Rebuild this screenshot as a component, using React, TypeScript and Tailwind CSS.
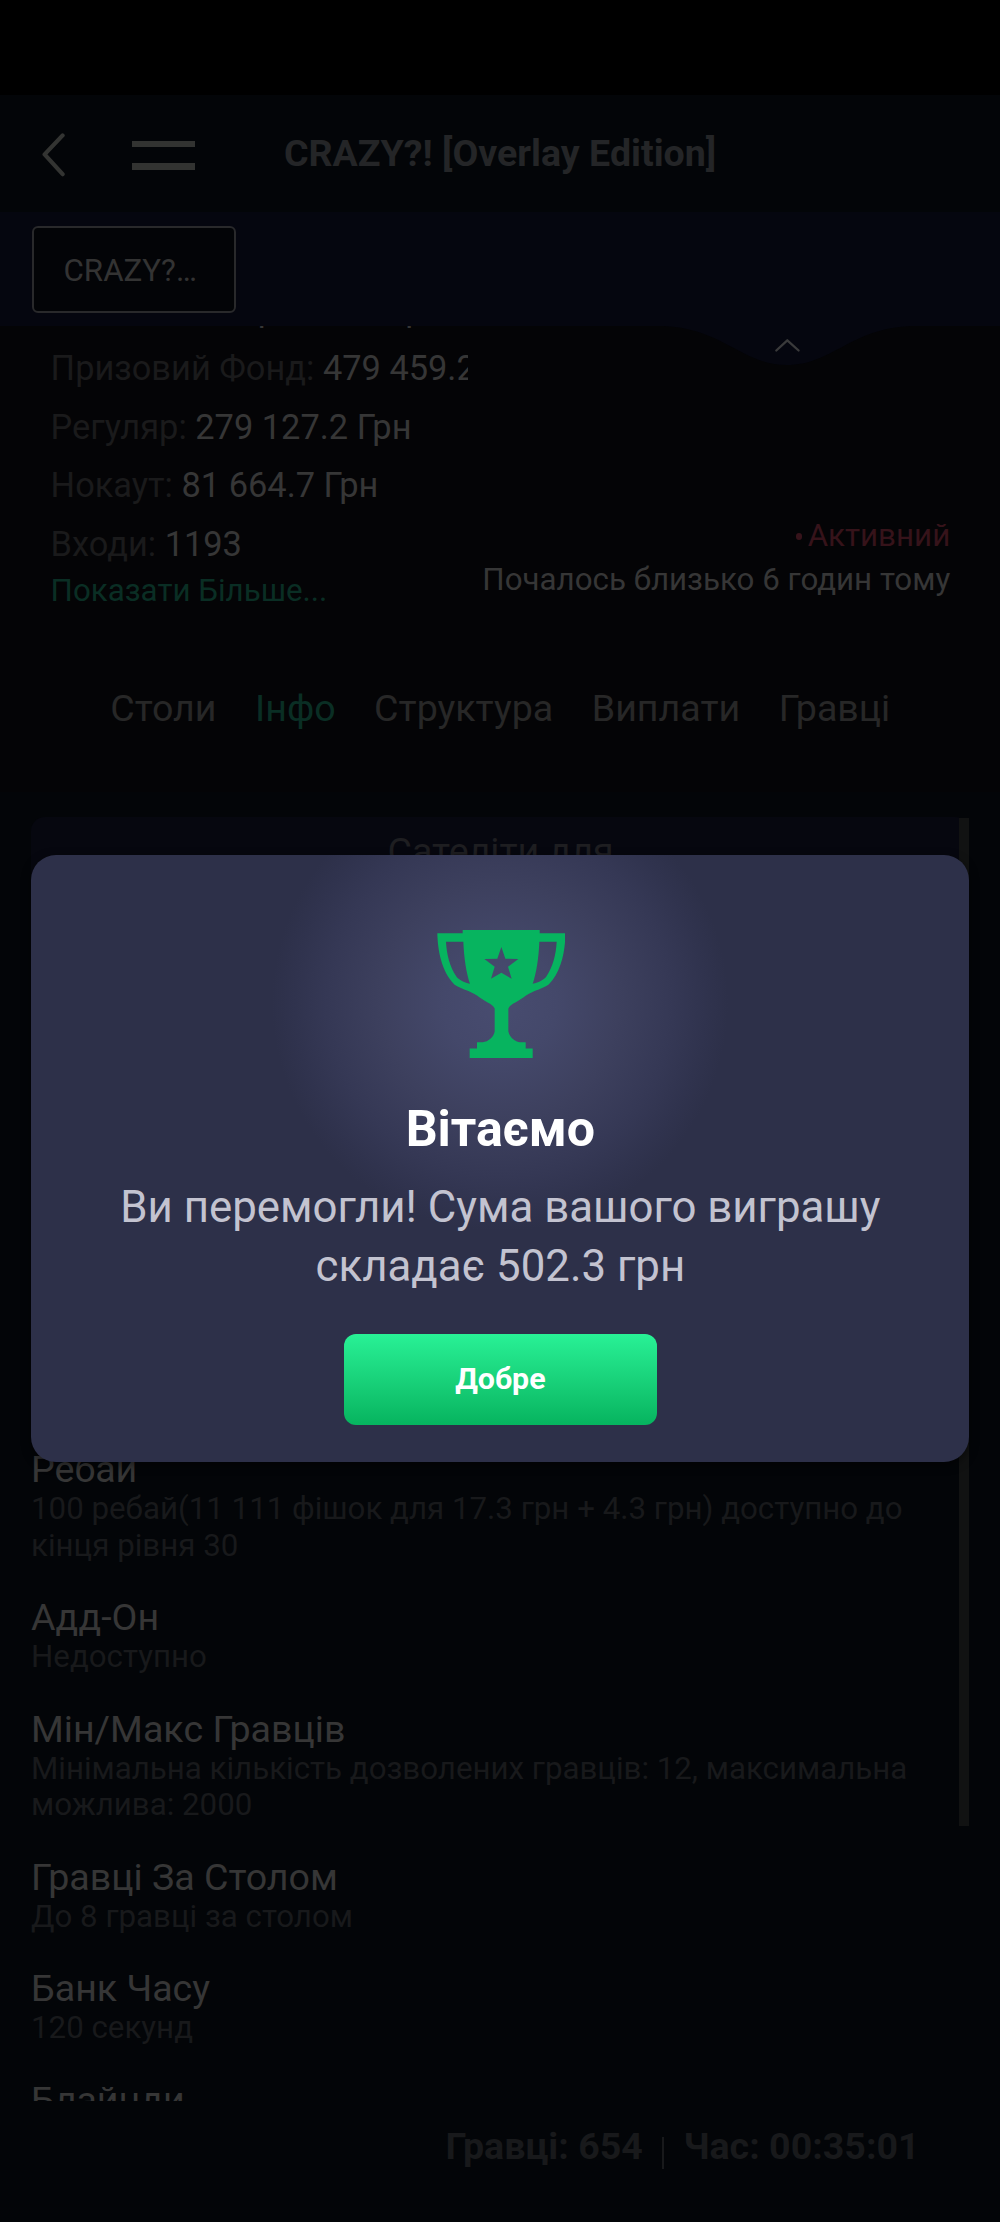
import React from 'react';

const stats = [
  { label: 'Бай-Ін:', value: '17.3 Грн + 4.3 Грн' },
  { label: 'Призовий Фонд:', value: '479 459.2 Грн' },
  { label: 'Регуляр:', value: '279 127.2 Грн' },
  { label: 'Нокаут:', value: '81 664.7 Грн' },
  { label: 'Входи:', value: '1193' },
];

const tabs = ['Столи', 'Інфо', 'Структура', 'Виплати', 'Гравці'];

const sections = [
  {
    title: 'Ребай',
    lines: ['100 ребай(11 111 фішок для 17.3 грн + 4.3 грн) доступно до', 'кінця рівня 30'],
  },
  { title: 'Адд-Он', lines: ['Недоступно'] },
  {
    title: 'Мін/Макс Гравців',
    lines: ['Мінімальна кількість дозволених гравців: 12, максимальна', 'можлива: 2000'],
  },
  { title: 'Гравці За Столом', lines: ['До 8 гравці за столом'] },
  { title: 'Банк Часу', lines: ['120 секунд'] },
  { title: 'Блайнди', lines: [] },
];

function Header() {
  return (
    <header className="flex h-[117px] shrink-0 items-center bg-[#030508] pl-[41px]">
      <svg className="h-[46px] w-[25px]" viewBox="0 0 25 46" fill="none" stroke="#333432" strokeWidth="4.2" strokeLinecap="round" strokeLinejoin="round">
        <path d="M21.6 4.4 3.6 23.4l18 19.8" />
      </svg>
      <div className="ml-[66.300px] mt-[4px] flex w-[62.500px] flex-col gap-[16px]">
        <span className="h-[6px] bg-[#323331]" />
        <span className="h-[6.5px] bg-[#323331]" />
      </div>
      <h1 className="-mt-[1px] ml-[89.200px] text-[37.55px] font-bold leading-[44px] text-[#242527]">
        CRAZY?! [Overlay Edition]
      </h1>
    </header>
  );
}

function TableStrip() {
  return (
    <div className="relative z-10 h-[114px] shrink-0 bg-[#05060f] pl-[32px] pt-[14px]">
      <div className="flex h-[87px] w-[204px] items-center rounded-[6px] border-2 border-[#29292b] bg-[#030407] pl-[29.5px] pt-[3px] text-[31.3px] leading-none text-[#333333]">
        CRAZY?…
      </div>
      <div className="absolute left-[664px] top-[113.5px]">
        <svg className="h-[40px] w-[246px]" viewBox="0 0 246 40" fill="none">
          <path d="M0 0C60 3 78 39 123 39S186 3 246 0Z" fill="#05060f" />
          <path d="M112.300 24.500 123.300 14.300 134.600 24.500" stroke="#3a3a3b" strokeWidth="2.300" strokeLinecap="round" strokeLinejoin="round" />
        </svg>
      </div>
    </div>
  );
}

function Summary() {
  return (
    <section className="h-[466px] shrink-0 overflow-hidden bg-[#040406]">
      <div className="flex items-end justify-between pl-[50.6px] pr-[49.800px]">
        <div className="-mt-[45.6px] w-[417.2px] overflow-hidden whitespace-nowrap text-[34.4px] leading-[58.6px]">
          {stats.map((s) => (
            <div key={s.label} className="text-[#363636]">
              <span className="text-[#1a1a1b]">{s.label}</span> {s.value}
            </div>
          ))}
          <div className="text-[31.3px] leading-[36px] text-[#0a2e24]">Показати Більше...</div>
        </div>
        <div className="pb-[7.500px] text-right text-[31.3px] leading-[44px]">
          <div className="flex items-center justify-end gap-[5.500px] text-[#36131a]">
            <span className="mt-[1px] h-[7px] w-[6.500px] rounded-full bg-[#36131a]" />
            Активний
          </div>
          <div className="text-[#363636]">Почалось близько 6 годин тому</div>
        </div>
      </div>
      <nav className="mt-[76.400px] flex gap-[38.500px] pl-[110.200px] text-[37.6px] leading-[44px] text-[#272727]">
        {tabs.map((t) => (
          <span key={t} className={t === 'Інфо' ? 'text-[#0a2e24]' : ''}>
            {t}
          </span>
        ))}
      </nav>
    </section>
  );
}

function InfoList() {
  return (
    <section className="relative mx-[31px] mt-[25px] h-[1283.700px] shrink-0 overflow-hidden">
      <div className="h-[590px] rounded-[14px] bg-[#06070f] pl-px pt-[12px] text-center text-[37.6px] leading-[44px] text-[#1e1e21]">
        Сателіти для
      </div>
      <div className="mt-[41.4px] flex flex-col gap-[33px]">
        {sections.map((s) => (
          <div key={s.title} className="whitespace-nowrap">
            <h2 className="text-[37.6px] leading-[42px] text-[#363636]">{s.title}</h2>
            {s.lines.map((l) => (
              <p key={l} className="relative top-[0.800px] text-[31.27px] leading-[36.500px] text-[#18191b]">
                {l}
              </p>
            ))}
          </div>
        ))}
      </div>
      <div className="absolute -right-[0.500px] top-[0.500px] h-[1008px] w-[11px] bg-[#111212]" />
    </section>
  );
}

function Footer() {
  return (
    <footer className="flex flex-1 items-start bg-[#030508] pl-[445.400px] pt-[23.500px] text-[37.6px] font-bold leading-[44px] text-[#18191b]">
      <span>Гравці: 654</span>
      <span className="ml-[19px] mt-[12.500px] h-[32px] w-[2.500px] bg-[#18191b]" />
      <span className="ml-[19px]">Час: 00:35:01</span>
    </footer>
  );
}

function Trophy() {
  return (
    <svg className="ml-[1px] h-[128.300px] w-[128.700px]" viewBox="110 91 386 384" preserveAspectRatio="none">
      <path
        fill="#07b45f"
        fillRule="evenodd"
        d="M187 91H418V101H495C495 150 484 215 445 254C427 267 401 271 377 287C356 304 330 312 324 326V395C328 413 345 426 359 427H376V446H397V475H208V446H230V427H247C264 426 280 411 283 395V326C277 312 251 304 230 287C206 271 180 267 162 254C123 215 112 150 111 101H187ZM137 126H189C191 175 198 220 209 252C190 247 175 240 168 230C148 200 139 165 137 126ZM469 126H417C415 175 408 220 397 252C416 247 431 240 438 230C458 200 467 165 469 126ZM303 142 315 177 354 178 323 201 334 237 303 219 272 237 283 201 252 178 291 177Z"
      />
    </svg>
  );
}

function WinDialog() {
  return (
    <div className="absolute inset-0 z-20 flex items-start justify-center pl-[0.800px] pt-[855.300px]">
      <div
        role="dialog"
        className="flex h-[606.400px] w-[938px] flex-col items-center rounded-[25px] bg-[#2d3049] bg-[radial-gradient(circle_228px_at_50%_148px,#484c70_0%,#44486a_25%,#3d405e_52%,#353855_76%,#30334e_90%,#2d3049_100%)] pt-[74.700px] shadow-[0_3px_10px_rgba(0,0,0,0.5)]"
      >
        <Trophy />
        <h2 className="mt-[41px] text-[50.1px] font-bold leading-[60px] text-white">Вітаємо</h2>
        <p className="mt-[18.500px] text-center text-[43.8px] leading-[59.2px] text-[#c3c3d0]">
          Ви перемогли! Сума вашого виграшу
          <br />
          складає 502.3 грн
        </p>
        <button className="mt-[37.800px] h-[90.700px] w-[312.700px] rounded-[12px] bg-linear-to-b from-[#28f196] to-[#06b45f] pb-[1px] text-[30.4px] font-bold leading-none text-white">
          Добре
        </button>
      </div>
    </div>
  );
}

export default function App() {
  return (
    <div className="relative flex h-[2222px] w-[1000px] flex-col overflow-hidden bg-[#030508] font-['Roboto',sans-serif]">
      <div className="h-[95px] shrink-0 bg-black" />
      <Header />
      <TableStrip />
      <Summary />
      <InfoList />
      <Footer />
      <WinDialog />
    </div>
  );
}
